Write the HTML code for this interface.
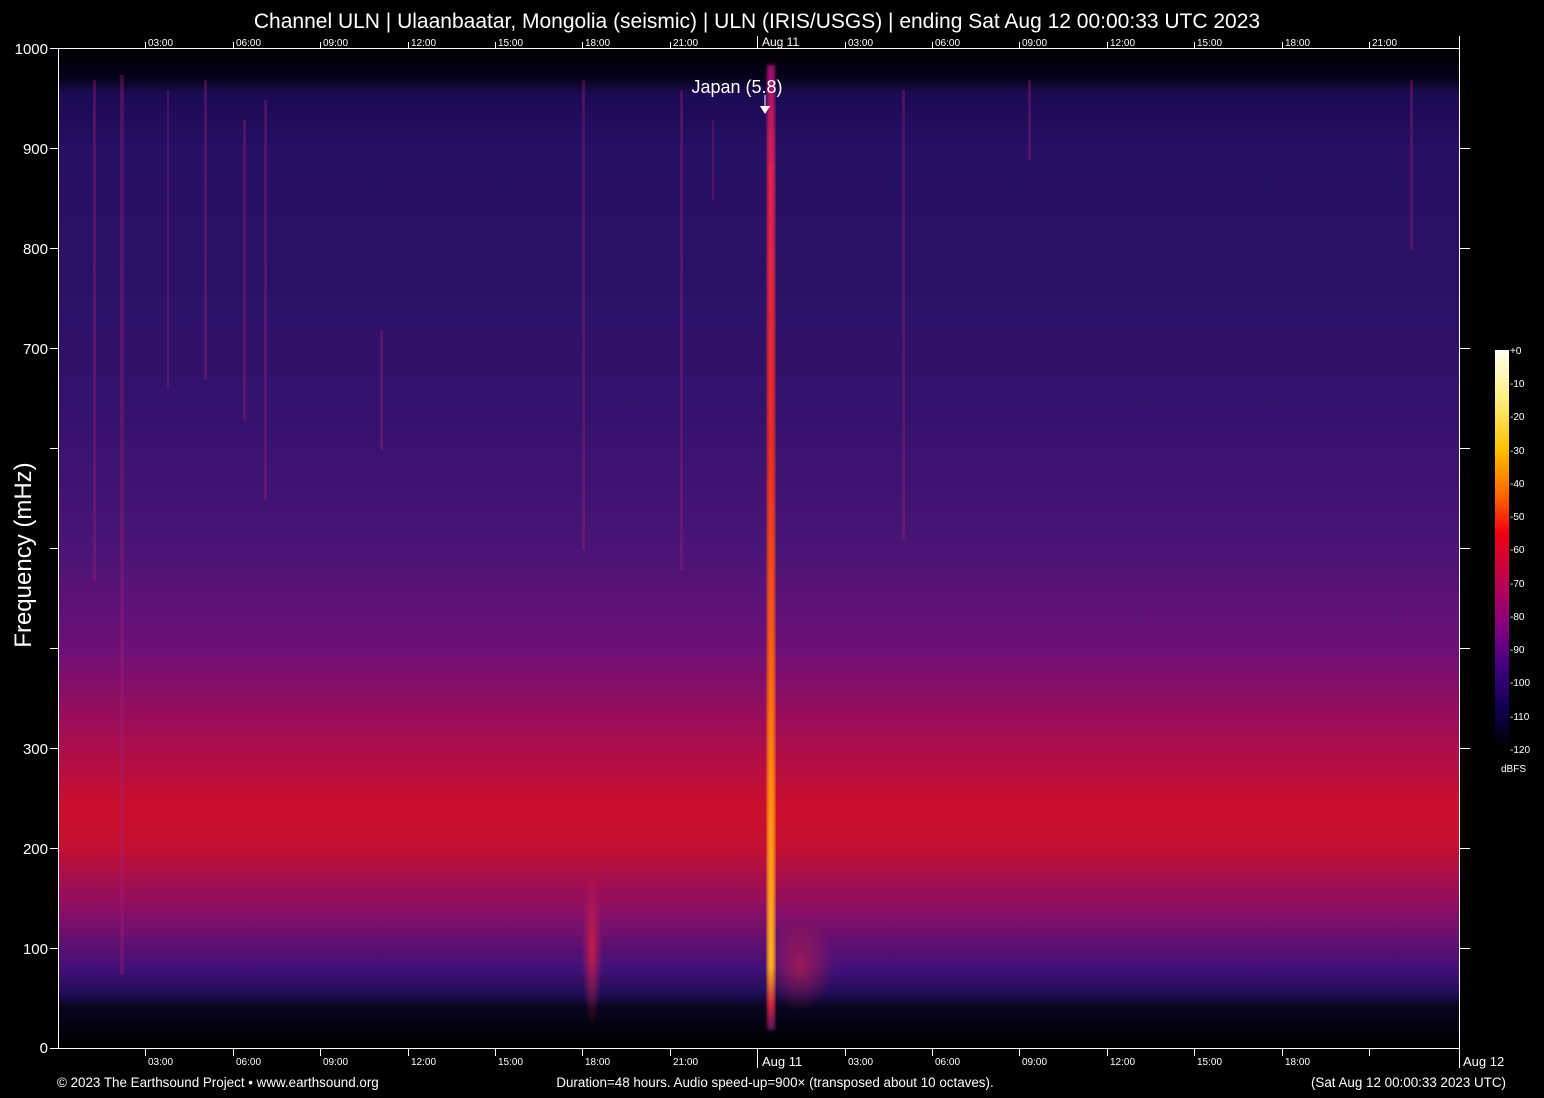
<!DOCTYPE html>
<html><head><meta charset="utf-8"><style>
html,body{margin:0;padding:0;background:#000;width:1544px;height:1098px;overflow:hidden}
svg{display:block}
text{font-family:"Liberation Sans",sans-serif;fill:#fff}
</style></head><body>
<svg width="1544" height="1098" viewBox="0 0 1544 1098" xmlns="http://www.w3.org/2000/svg">
<defs>
<linearGradient id="bg" x1="0" y1="48" x2="0" y2="1048" gradientUnits="userSpaceOnUse">
<stop offset="0" stop-color="#000"/>
<stop offset="0.03" stop-color="#05031a"/>
<stop offset="0.045" stop-color="#1c0a52"/>
<stop offset="0.1" stop-color="#260f64"/>
<stop offset="0.35" stop-color="#32126c"/>
<stop offset="0.5" stop-color="#4a1476"/>
<stop offset="0.6" stop-color="#6c1078"/>
<stop offset="0.68" stop-color="#a00e55"/>
<stop offset="0.76" stop-color="#cc0e2c"/>
<stop offset="0.8" stop-color="#c40f32"/>
<stop offset="0.86" stop-color="#8c0f64"/>
<stop offset="0.92" stop-color="#421178"/>
<stop offset="0.945" stop-color="#200e58"/>
<stop offset="0.96" stop-color="#08051c"/>
<stop offset="1" stop-color="#000"/>
</linearGradient>
<linearGradient id="eq" x1="0" y1="70" x2="0" y2="1035" gradientUnits="userSpaceOnUse">
<stop offset="0" stop-color="#a01070"/>
<stop offset="0.1" stop-color="#e02050"/>
<stop offset="0.4" stop-color="#f03020"/>
<stop offset="0.6" stop-color="#ff6010"/>
<stop offset="0.75" stop-color="#ff9010"/>
<stop offset="0.93" stop-color="#ffb020"/>
<stop offset="0.97" stop-color="#d02040"/>
<stop offset="1" stop-color="#401060"/>
</linearGradient>
<linearGradient id="cb" x1="0" y1="350" x2="0" y2="748" gradientUnits="userSpaceOnUse">
<stop offset="0" stop-color="#fffff0"/>
<stop offset="0.12" stop-color="#fff080"/>
<stop offset="0.25" stop-color="#ffc000"/>
<stop offset="0.37" stop-color="#ff6000"/>
<stop offset="0.46" stop-color="#f00010"/>
<stop offset="0.58" stop-color="#c00050"/>
<stop offset="0.7" stop-color="#800080"/>
<stop offset="0.8" stop-color="#400080"/>
<stop offset="0.9" stop-color="#100050"/>
<stop offset="1" stop-color="#000"/>
</linearGradient>
<radialGradient id="blob" cx="0.5" cy="0.5" r="0.5">
<stop offset="0" stop-color="#e02040" stop-opacity="0.8"/>
<stop offset="1" stop-color="#e02040" stop-opacity="0"/>
</radialGradient>
<filter id="blur"><feGaussianBlur stdDeviation="1.5"/></filter>
</defs>
<rect x="58" y="48" width="1402" height="1000" fill="url(#bg)"/>
<g opacity="0.35" fill="#a0207a">
<rect x="93" y="80" width="3" height="500"/>
<rect x="120" y="75" width="4" height="900"/>
<rect x="167" y="90" width="2" height="300"/>
<rect x="204" y="80" width="3" height="300"/>
<rect x="243" y="120" width="3" height="300"/>
<rect x="264" y="100" width="3" height="400"/>
<rect x="380" y="330" width="3" height="120"/>
<rect x="582" y="80" width="3" height="470"/>
<rect x="680" y="90" width="3" height="480"/>
<rect x="712" y="120" width="2" height="80"/>
<rect x="902" y="90" width="3" height="450"/>
<rect x="1028" y="80" width="3" height="80"/>
<rect x="1410" y="80" width="3" height="170"/>
</g>
<ellipse cx="592" cy="950" rx="10" ry="75" fill="url(#blob)"/>
<ellipse cx="800" cy="965" rx="35" ry="45" fill="url(#blob)" opacity="0.7"/>
<rect x="767" y="65" width="8" height="965" fill="url(#eq)" filter="url(#blur)"/>
<g stroke="#fff" stroke-width="1" fill="none">
<line x1="58.5" y1="48" x2="58.5" y2="1048"/>
<line x1="1459.5" y1="48" x2="1459.5" y2="1048"/>
<line x1="58" y1="1048.5" x2="1460" y2="1048.5"/>
<line x1="58" y1="48.5" x2="1460" y2="48.5"/>
<path d="M50 48.5h8M50 148.5h8M50 248.5h8M50 348.5h8M50 448.5h8M50 548.5h8M50 648.5h8M50 748.5h8M50 848.5h8M50 948.5h8M50 1048.5h8"/>
<path d="M1460 148.5h10M1460 248.5h10M1460 348.5h10M1460 448.5h10M1460 548.5h10M1460 648.5h10M1460 748.5h10M1460 848.5h10M1460 948.5h10"/>
<path d="M145.5 1048v8M233.5 1048v8M320.5 1048v8M408.5 1048v8M495.5 1048v8M582.5 1048v8M670.5 1048v8M757.5 1048v20M845.5 1048v8M932.5 1048v8M1019.5 1048v8M1107.5 1048v8M1194.5 1048v8M1282.5 1048v8M1369.5 1048v8M1459.5 1048v20"/>
<path d="M145.5 48v-6M233.5 48v-6M320.5 48v-6M408.5 48v-6M495.5 48v-6M582.5 48v-6M670.5 48v-6M757.5 48v-12M845.5 48v-6M932.5 48v-6M1019.5 48v-6M1107.5 48v-6M1194.5 48v-6M1282.5 48v-6M1369.5 48v-6M1459.5 48v-12"/>
<line x1="765" y1="95" x2="765" y2="108"/>
</g>
<polygon points="760,106 770,106 765,114" fill="#fff"/>
<text x="757" y="28" font-size="21" text-anchor="middle">Channel ULN | Ulaanbaatar, Mongolia (seismic) | ULN (IRIS/USGS) | ending Sat Aug 12 00:00:33 UTC 2023</text>
<text x="737" y="93" font-size="18" text-anchor="middle">Japan (5.8)</text>
<g font-size="15" text-anchor="end">
<text x="48" y="54">1000</text><text x="48" y="154">900</text><text x="48" y="254">800</text><text x="48" y="354">700</text>
<text x="48" y="754">300</text><text x="48" y="854">200</text><text x="48" y="954">100</text><text x="48" y="1053">0</text>
</g>
<text transform="translate(31,555) rotate(-90)" font-size="24" text-anchor="middle">Frequency (mHz)</text>
<g font-size="10">
<text x="148" y="46">03:00</text><text x="236" y="46">06:00</text><text x="323" y="46">09:00</text><text x="411" y="46">12:00</text><text x="498" y="46">15:00</text><text x="585" y="46">18:00</text><text x="673" y="46">21:00</text><text x="848" y="46">03:00</text><text x="935" y="46">06:00</text><text x="1022" y="46">09:00</text><text x="1110" y="46">12:00</text><text x="1197" y="46">15:00</text><text x="1285" y="46">18:00</text><text x="1372" y="46">21:00</text>
<text x="148" y="1065">03:00</text><text x="236" y="1065">06:00</text><text x="323" y="1065">09:00</text><text x="411" y="1065">12:00</text><text x="498" y="1065">15:00</text><text x="585" y="1065">18:00</text><text x="673" y="1065">21:00</text><text x="848" y="1065">03:00</text><text x="935" y="1065">06:00</text><text x="1022" y="1065">09:00</text><text x="1110" y="1065">12:00</text><text x="1197" y="1065">15:00</text><text x="1285" y="1065">18:00</text>
</g>
<text x="762" y="46" font-size="12">Aug 11</text>
<text x="762" y="1066" font-size="13">Aug 11</text>
<text x="1463" y="1066" font-size="13">Aug 12</text>
<rect x="1495" y="350" width="14" height="398" fill="url(#cb)"/>
<g font-size="10">
<text x="1510" y="354">+0</text><text x="1510" y="387">-10</text><text x="1510" y="420">-20</text><text x="1510" y="454">-30</text><text x="1510" y="487">-40</text><text x="1510" y="520">-50</text><text x="1510" y="553">-60</text><text x="1510" y="587">-70</text><text x="1510" y="620">-80</text><text x="1510" y="653">-90</text><text x="1510" y="686">-100</text><text x="1510" y="720">-110</text><text x="1510" y="753">-120</text>
<text x="1501" y="772">dBFS</text>
</g>
<g font-size="13.4">
<text x="57" y="1087">© 2023 The Earthsound Project • www.earthsound.org</text>
<text x="775" y="1087" text-anchor="middle">Duration=48 hours. Audio speed-up=900× (transposed about 10 octaves).</text>
<text x="1506" y="1087" text-anchor="end">(Sat Aug 12 00:00:33 2023 UTC)</text>
</g>
</svg>
</body></html>
